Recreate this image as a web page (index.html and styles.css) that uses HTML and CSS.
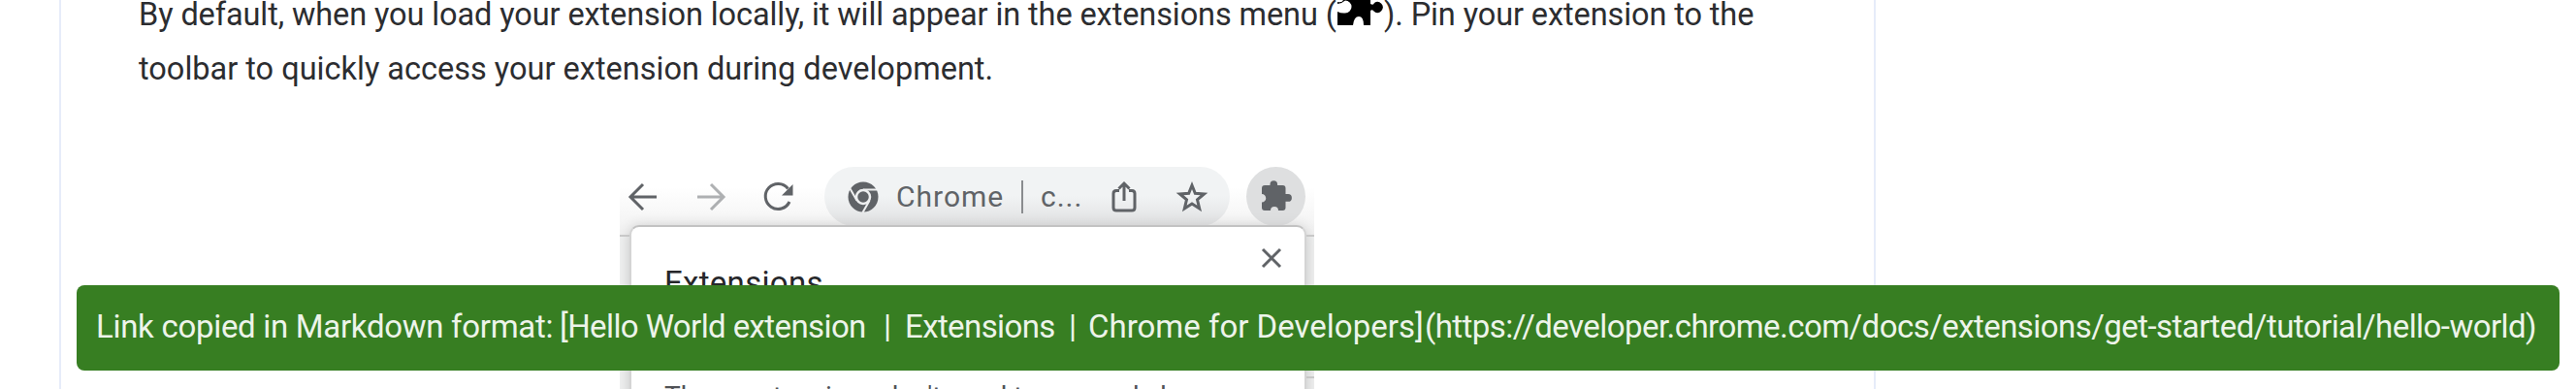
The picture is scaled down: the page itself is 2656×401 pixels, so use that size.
FILE: index.html
```html
<!DOCTYPE html>
<html lang="en">
<head>
<meta charset="utf-8">
<title>Hello World extension | Extensions | Chrome for Developers</title>
<link rel="stylesheet" href="styles.css">
</head>
<body>
<main class="article">
  <p class="copy">
    <span class="line"><span class="s1">By default, when you load your extension locally, it will appear in the extensions menu (</span><svg class="puzzle" viewBox="0 0 48 40"><path d="M6 0H34V18Q37 20 38 17A5.500 5.500 0 1 1 38 26Q36 23 34 25V40H27Q27 31 22 31T16 40H0V26Q4 28 8 27.500A6.500 6.500 0 1 0 8 14.500Q4 18 0 18V16Q5 17 6 14Z"/></svg><span class="s2">). Pin your extension to the</span></span>
    <span class="line s3">toolbar to quickly access your extension during development.</span>
  </p>
  <figure class="shot">
    <div class="toolbar">
      <svg class="nav" viewBox="0 0 32 32"><path d="M30 16H4M16 3L3 16L16 29"/></svg>
      <svg class="nav faded" viewBox="0 0 32 32"><path d="M2 16H28M16 3L29 16L16 29"/></svg>
      <svg class="nav" viewBox="0 0 32 32"><path d="M27 21A13 13 0 1 1 25.500 7.500"/><path class="solid" d="M30.500 3V14.500H19Z"/></svg>
      <div class="omnibox">
        <svg class="chrome" viewBox="0 0 32 32"><circle cx="16" cy="16" r="15.500"/><path d="M16 8.500H30M9.500 19.700L2.500 7.500M22.500 19.700L15.500 32"/><circle class="ring" cx="16" cy="16" r="7"/></svg>
        <span class="site">Chrome</span><i class="bar"></i><span class="host">c...</span>
        <svg class="share" viewBox="0 0 26 32"><path d="M8 9.500H5Q2 9.500 2 12.500V27Q2 30 5 30H21Q24 30 24 27V12.500Q24 9.500 21 9.500H18M13 20V3M7.500 7.500L13 2L18.500 7.500"/></svg>
        <svg class="star" viewBox="0 0 32 32"><path d="M16 4L19.300 12.300L28.500 13L21.500 18.800L23.700 28L16 23L8.300 28L10.500 18.800L3.500 13L12.700 12.300Z"/></svg>
      </div>
      <div class="ext"><svg viewBox="0 0 32 32"><path d="M4 5H9.500V4A3.800 3.800 0 0 1 17.100 4V5H22.500Q25.500 5 25.500 8V14H28A3.900 3.900 0 0 1 28 21.800H25.500V28Q25.500 31 22.500 31H18A4 4 0 0 0 10 31H4Q1 31 1 28V22.500A4.200 4.200 0 0 0 1 14V8Q1 5 4 5Z"/></svg></div>
    </div>
    <div class="popup">
      <div class="head"><h2>Extensions</h2><svg viewBox="0 0 20 20"><path d="M1 1L19 19M19 1L1 19"/></svg></div>
      <p class="note">These extensions don't need to see and change</p>
    </div>
  </figure>
</main>
<div class="toast"><span class="t1">Link copied in Markdown format: </span><span class="t2">[Hello World extension</span><span class="t3">|</span><span class="t4">Extensions</span><span class="t5">|</span><span class="t6">Chrome for Developers]</span><span class="t7">(https://developer.chrome.com/docs/extensions/get-started/tutorial/hello-world)</span></div>
</body>
</html>
```
FILE: styles.css
```css
* { box-sizing: border-box; }
body { margin: 0; height: 401px; overflow: hidden; background: #fff; font-family: Roboto, "Liberation Sans", sans-serif; }
svg { display: block; flex: none; overflow: visible; }
.article { width: 1873px; height: 401px; margin-left: 61px; border: solid #e6ecf9; border-width: 0 2px; overflow: hidden; }
.copy { margin: -13px 0 0 80px; font-size: 32.500px; line-height: 56px; color: #2c2d30; }
.line { display: flex; width: max-content; white-space: pre; height: 56px; }
.s1 { width: 1236px; letter-spacing: -.1px; }
.s2 { letter-spacing: -.1px; }
.puzzle { width: 48px; height: 40px; margin: -1px 0 0; fill: #000; }
.shot { position: relative; width: 716px; height: 260px; margin: 64px 0 0 576px; overflow: hidden; background: linear-gradient(#c9c9c9, #c9c9c9) 100% 225px / 9px 2px no-repeat, #f0f1f1; }
.toolbar { display: flex; height: 81px; padding: 9px 0 0 8px; gap: 38px; border-bottom: 2px solid #c9c9c9; background: linear-gradient(#fff 30px, #f1f1f1); }
.nav { width: 32px; height: 32px; margin-top: 15px; fill: none; stroke: #606367; stroke-width: 3; }
.faded { opacity: .5; }
.nav .solid { fill: #606367; stroke: none; }
.omnibox { display: flex; flex: none; width: 418px; height: 61px; margin-left: -7px; border-radius: 31px; background: linear-gradient(#f1f3f4 30px, #e0e1e2); padding-left: 24px; color: #606367; line-height: 62px; font-size: 30px; white-space: pre; }
.chrome { width: 32px; height: 32px; margin: 15px 18px 0 0; fill: #606367; }
.chrome path { stroke: #eeeff0; stroke-width: 2; fill: none; }
.chrome .ring { stroke: #eeeff0; stroke-width: 2.500; }
.site { width: 129px; letter-spacing: 1px; }
.bar { width: 2px; height: 34px; margin: 14px 18px 0 0; background: #8a8c8f; }
.host { width: 73px; letter-spacing: 1px; }
.share { width: 26px; height: 32px; margin-top: 15px; fill: none; stroke: #606367; stroke-width: 3; }
.star { width: 32px; height: 32px; margin: 15px 0 0 41px; fill: none; stroke: #606367; stroke-width: 3; }
.ext { flex: none; width: 61px; height: 61px; margin-left: -21px; border-radius: 50%; background: #dedfe0; }
.ext svg { width: 32px; height: 32px; margin: 14px 0 0 15px; fill: #606367; }
.popup { position: absolute; left: 10px; top: 69px; width: 698px; height: 200px; background: #fff; border: 2px solid #c9c9c9; border-color: #c2c2c2 #d4d4d4; border-bottom: 0; border-radius: 10px 10px 0 0; box-shadow: 0 2px 14px #c4c4c4; }
.head { display: flex; justify-content: space-between; padding: 22px 24px 0 34px; height: 151px; }
.head svg { width: 20px; height: 20px; fill: none; stroke: #606367; stroke-width: 3; }
.head h2 { margin: 16px 0 0; font-size: 33px; line-height: 40px; font-weight: 400; color: #26272a; letter-spacing: .3px; }
.note { margin: 7px 0 0 34px; font-size: 28px; line-height: 34px; color: #505256; white-space: nowrap; }
.toast { position: fixed; display: flex; left: 79px; top: 294px; width: 2560px; height: 88px; border-radius: 8px; padding-left: 20px; background: #377e22; color: #edf4ea; font-size: 33px; line-height: 85px; white-space: pre; }
.toast span { flex: none; }
.t1 { width: 478px; letter-spacing: -.3px; }
.t2 { width: 334px; letter-spacing: -.6px; }
.t3 { width: 22px; }
.t4 { width: 169px; letter-spacing: -.6px; }
.t5 { width: 20px; }
.t6 { width: 347px; }
.t7 { letter-spacing: -.55px; }
```
